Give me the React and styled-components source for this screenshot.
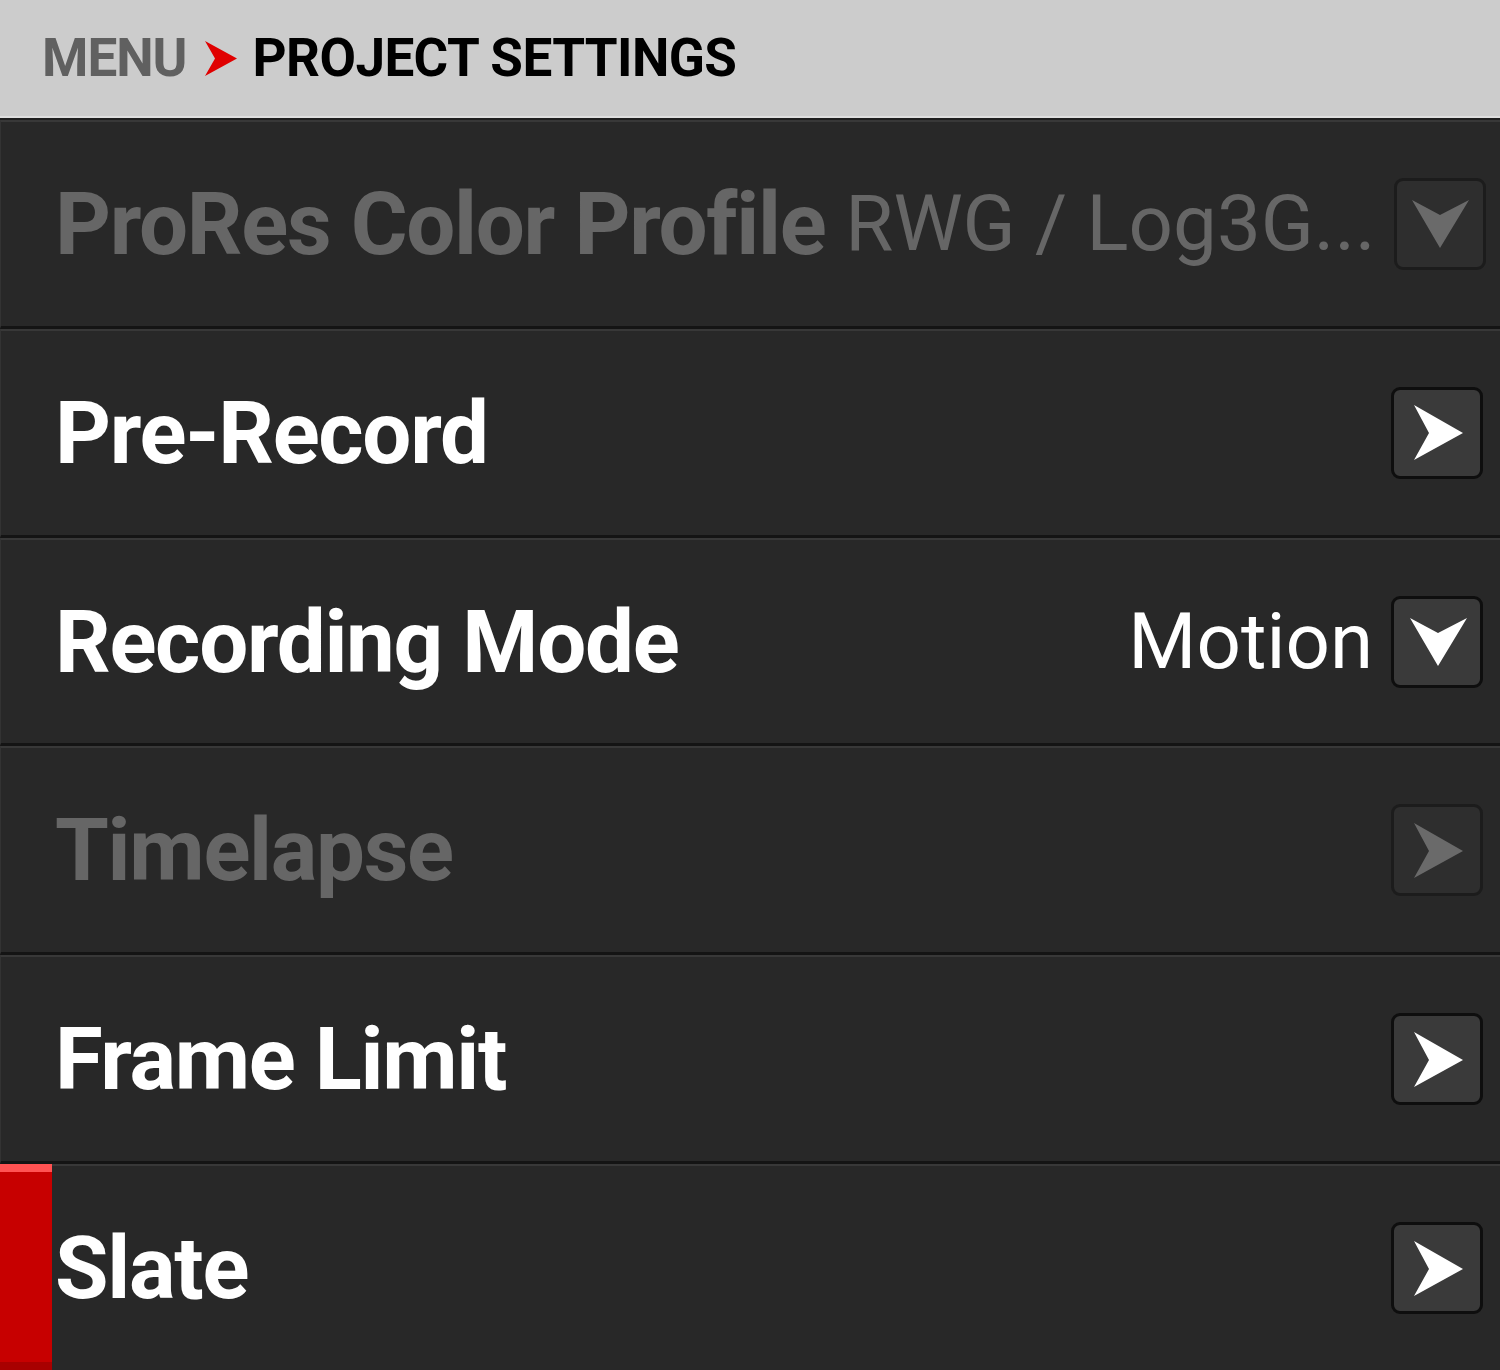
import styled, { createGlobalStyle } from "styled-components";

const GlobalStyle = createGlobalStyle`
  html, body {
    margin: 0;
    padding: 0;
    background: #282828;
  }
  body {
    font-family: Roboto, "Liberation Sans", sans-serif;
  }
`;

const items = [
  { label: "ProRes Color Profile", value: "RWG / Log3G...", kind: "down", disabled: true },
  { label: "Pre-Record", kind: "right" },
  { label: "Recording Mode", value: "Motion", kind: "down" },
  { label: "Timelapse", kind: "right", disabled: true },
  { label: "Frame Limit", kind: "right" },
  { label: "Slate", kind: "right", selected: true },
];

function ArrowIcon({ kind, color }) {
  return (
    <svg width="85" height="85" viewBox="0 0 85 85">
      {kind === "down" ? (
        <polygon points="15,19 43,34 72,19 43,67" fill={color} />
      ) : (
        <polygon points="19,15 68,43 19,70 34,43" fill={color} />
      )}
    </svg>
  );
}

function App() {
  return (
    <>
      <GlobalStyle />
      <Screen>
        <Header>
          <Crumb>MENU</Crumb>
          <Chevron width="32" height="35" viewBox="0 0 32 35">
            <polygon points="0,0 32,17.5 0,35 10,17.5" fill="#e00000" />
          </Chevron>
          <Title>PROJECT SETTINGS</Title>
        </Header>
        <List>
          {items.map((it) => (
            <Row key={it.label} $selected={it.selected}>
              <Label $disabled={it.disabled}>{it.label}</Label>
              {it.value && <Value $disabled={it.disabled}>{it.value}</Value>}
              <IconButton $disabled={it.disabled} $pushed={!it.value}>
                <ArrowIcon kind={it.kind} color={it.disabled ? "#6a6a6a" : "#ffffff"} />
              </IconButton>
            </Row>
          ))}
        </List>
      </Screen>
    </>
  );
}

export default App;

const Screen = styled.div`
  width: 1500px;
  height: 1370px;
  display: flex;
  flex-direction: column;
  background: #282828;
  overflow: hidden;
`;

const Header = styled.div`
  height: 118px;
  flex-shrink: 0;
  background: #cccccc;
  border-bottom: 2px solid #dedede;
  display: flex;
  align-items: center;
  padding: 0 0 0 42px;
  box-sizing: border-box;
`;

const Crumb = styled.span`
  font-size: 53px;
  font-weight: 700;
  color: #606060;
  letter-spacing: -1px;
`;

const Chevron = styled.svg`
  margin: 0 16px 0 18px;
`;

const Title = styled.span`
  font-size: 53px;
  font-weight: 700;
  color: #000000;
  letter-spacing: -0.6px;
`;

const List = styled.div`
  flex: 1;
  display: flex;
  flex-direction: column;
  border-top: 2px solid #1e1e1e;
`;

const Row = styled.div`
  flex: 1;
  position: relative;
  display: flex;
  align-items: center;
  gap: 20px;
  padding: 0 17px 0 54px;
  background: #282828;
  border-top: 2px solid #383838;
  border-bottom: 3px solid #141414;
  border-left: 1px solid #333333;

  &:last-child {
    border-bottom: none;
  }

  ${(p) =>
    p.$selected &&
    `
    &::before {
      content: "";
      position: absolute;
      left: -1px;
      top: -2px;
      bottom: 0;
      width: 52px;
      background: #c70000;
      border-top: 8px solid #ff5252;
      border-bottom: 8px solid #a80000;
      box-sizing: border-box;
    }
  `}
`;

const Label = styled.span`
  font-size: 87px;
  font-weight: 700;
  color: ${(p) => (p.$disabled ? "#666666" : "#ffffff")};
  letter-spacing: -1.3px;
  white-space: nowrap;
  position: relative;
`;

const Value = styled.span`
  margin-left: auto;
  margin-right: -2px;
  font-size: 78px;
  font-weight: 400;
  color: ${(p) => (p.$disabled ? "#666666" : "#ffffff")};
  white-space: nowrap;
`;

const IconButton = styled.div`
  margin-left: ${(p) => (p.$pushed ? "auto" : "0")};
  width: 92px;
  height: 92px;
  box-sizing: border-box;
  border: 3px solid ${(p) => (p.$disabled ? "#1c1c1c" : "#0e0e0e")};
  border-radius: 9px;
  background: ${(p) => (p.$disabled ? "#2e2e2e" : "#3a3a3a")};
  display: flex;
  align-items: center;
  justify-content: center;
  flex-shrink: 0;
`;
